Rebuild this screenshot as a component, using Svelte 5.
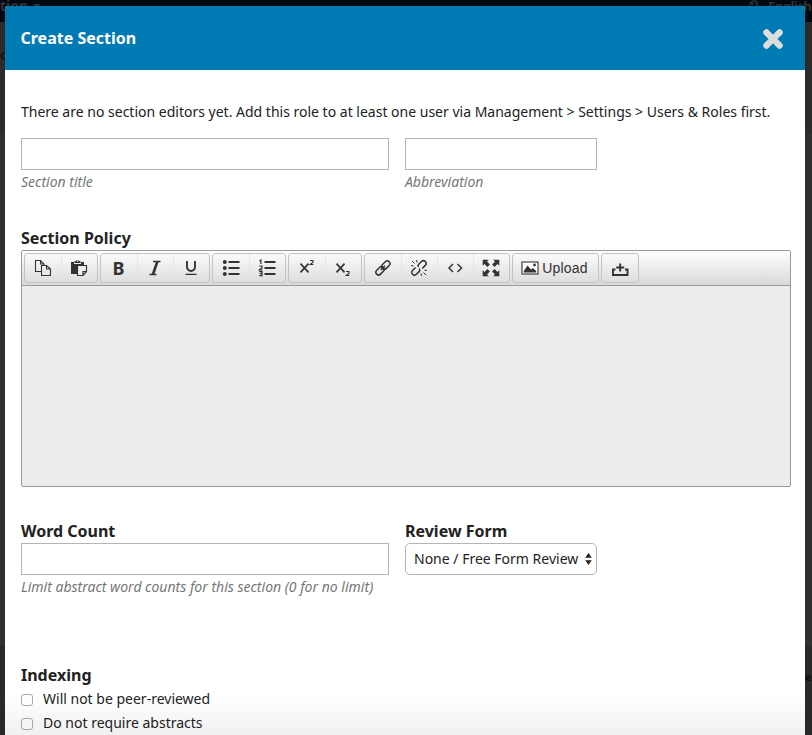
<script>
  const groups = [
    ['copy', 'paste'],
    ['bold', 'italic', 'underline'],
    ['bullets', 'numbers'],
    ['sup', 'sub'],
    ['link', 'unlink', 'code', 'full'],
    ['upload'],
    ['tray']
  ];
  const options = ['Will not be peer-reviewed', 'Do not require abstracts'];
</script>

<div class="page">
  <div class="backdrop">
    <span class="ghost nav">tion</span>
    <span class="ghost caret"></span>
    <svg class="ghost globe" width="10" height="10" viewBox="0 0 10 10"><circle cx="5" cy="5" r="4.200" fill="none" stroke="#333" stroke-width="1.200" /><path d="M2 2l3 1-2 3zM6 2l2 2-1 3z" fill="#333" /></svg>
    <span class="ghost lang">English</span>
    <span class="ghost side">c</span>
    <span class="ghost edge">e</span>
  </div>

  <main class="modal">
    <header>
      <h1>Create Section</h1>
      <button class="close" aria-label="Close">
        <svg width="22" height="22" viewBox="0 0 22 22"><path d="M4.700 4.700L17.300 17.300M17.300 4.700L4.700 17.300" stroke="#ddd" stroke-width="6.200" stroke-linecap="round" /><path d="M3.300 1.300H5.600L8.500 4.600 4.600 8.500 1.300 5.600V3.300zM16.400 1.300H18.700L20.700 3.300V5.600L17.400 8.700 13.500 4.800zM1.300 16.400L4.600 13.500 8.500 17.400 5.600 20.700H3.300L1.300 18.700zM17.400 13.500L20.700 16.400V18.700L18.700 20.700H16.400L13.500 17.400z" fill="#ddd" /></svg>
      </button>
    </header>

    <form>
      <p class="notice">There are no section editors yet. Add this role to at least one user via Management &gt; Settings &gt; Users &amp; Roles first.</p>
      <div class="row names">
        <label class="wide"><input type="text" /><span class="hint">Section title</span></label>
        <label class="narrow"><input type="text" /><span class="hint">Abbreviation</span></label>
      </div>

      <h2 class="policy">Section Policy</h2>
      <div class="editor">
        <div class="toolbar">
          {#each groups as group}
            <div class="group">
              {#each group as name}
                <button type="button" class="tool" class:upload={name === 'upload'} aria-label={name}>
                  {#if name === 'copy'}
                    <svg width="18" height="18" viewBox="0 0 18 18" fill="none" stroke="#333" stroke-width="1.100"><path d="M7 12.500H1.500V1.500H6.500L10 5V6" /><path d="M6.500 1.500V5H10M7.500 6.500H12.500L16.500 10V16.500H7.500ZM12.500 6.500V10H16.500" /></svg>
                  {:else if name === 'paste'}
                    <svg width="18" height="18" viewBox="0 0 18 18"><path d="M1 3H4V5H11V3H14V6H8V15H1ZM4.500 2H6Q7.500 -.2 9 2H10.500V4H4.500Z" fill="#333" /><path d="M7.500 6.500H16.500V12.500L13 16.500H7.500ZM16.500 12.500H13V16.500" fill="#eee" stroke="#333" stroke-width="1.200" /><circle cx="7.500" cy="2.200" r=".7" fill="#eee" /></svg>
                  {:else if name === 'bold'}
                    <span class="glyph bold">B</span>
                  {:else if name === 'italic'}
                    <svg width="18" height="18" viewBox="0 0 18 18"><path d="M7 2.500H14.500M3.500 15.500H10.500" stroke="#333" stroke-width="1.300" /><path d="M11.400 2.500L6.900 15.500" stroke="#333" stroke-width="2.600" /></svg>
                  {:else if name === 'underline'}
                    <svg width="18" height="18" viewBox="0 0 18 18" fill="none" stroke="#333"><path d="M5 2V7.500C5 13.400 13 13.400 13 7.500V2" stroke-width="1.900" /><path d="M3.500 15.300H14.500" stroke-width="1.300" /></svg>
                  {:else if name === 'bullets'}
                    <svg width="18" height="18" viewBox="0 0 18 18"><path d="M6.500 3H17.500M6.500 9H17.500M6.500 15H17.500" stroke="#333" stroke-width="1.900" /><circle cx="2.800" cy="3" r="2" fill="#333" /><circle cx="2.800" cy="9" r="2" fill="#333" /><circle cx="2.800" cy="15" r="2" fill="#333" /></svg>
                  {:else if name === 'numbers'}
                    <svg width="18" height="18" viewBox="0 0 18 18" fill="none" stroke="#333"><path d="M6.500 3H17.500M6.500 9H17.500M6.500 15H17.500" stroke-width="1.900" /><path d="M1.500 2L2.900 1V5M1.200 7H4V8.800L1.500 10.800H4.400M1.200 12.700H4V16.700H1.200M1.800 14.700H4" stroke-width="1.200" /></svg>
                  {:else if name === 'sup'}
                    <svg width="18" height="18" viewBox="0 0 18 18" fill="none" stroke="#333"><path d="M2.500 4.700L10.500 13.300M10.500 4.700L2.500 13.300" stroke-width="1.700" /><path d="M12 1.500H15V3.300L12.300 5.500H15.400" stroke-width="1.100" /></svg>
                  {:else if name === 'sub'}
                    <svg width="18" height="18" viewBox="0 0 18 18" fill="none" stroke="#333"><path d="M2.500 4.700L10.500 13.300M10.500 4.700L2.500 13.300" stroke-width="1.700" /><path d="M12 12.500H15V14.300L12.300 16.500H15.400" stroke-width="1.100" /></svg>
                  {:else if name === 'link'}
                    <svg width="18" height="18" viewBox="0 0 18 18" fill="none" stroke="#333"><g transform="rotate(-45 9 9)" stroke-width="1.500"><rect x=".2" y="6.200" width="9.400" height="5.400" rx="2.700" /><rect x="8.400" y="6.200" width="9.400" height="5.400" rx="2.700" /><path d="M6 8.900H12" /></g></svg>
                  {:else if name === 'unlink'}
                    <svg width="18" height="18" viewBox="0 0 18 18" fill="none" stroke="#333"><g transform="rotate(-45 9 9)" stroke-width="1.500"><path d="M7 6.200H2.700A2.700 2.700 0 0 0 2.700 11.600H6.500Q8.300 11.600 8.600 9.500M11 11.600H15.300A2.700 2.700 0 0 0 15.300 6.200H11.500Q9.700 6.200 9.400 8" /></g><path d="M2 2L4.500 4.500M6.500 1L7 3.500M1 6.500L3.500 7M16 16L13.500 13.500M11.500 17L11 14.500M17 11.500L14.500 11" stroke-width="1" /></svg>
                  {:else if name === 'code'}
                    <svg width="18" height="18" viewBox="0 0 18 18" fill="none" stroke="#333" stroke-width="1.500"><path d="M7 5L3 9 7 13M11.500 5L15.500 9 11.500 13" /></svg>
                  {:else if name === 'full'}
                    <svg width="18" height="18" viewBox="0 0 18 18" fill="#333"><path d="M.7 .7H6.800L5 2.500 7.900 5.400 5.400 7.900 2.500 5 .7 6.800ZM17.300 .7V6.800L15.500 5 12.600 7.900 10.100 5.400 13 2.500 11.200 .7ZM.7 17.300V11.200L2.500 13 5.400 10.100 7.900 12.600 5 15.500 6.800 17.300ZM17.300 17.300H11.200L13 15.500 10.100 12.600 12.600 10.100 15.500 13 17.300 11.200Z" /></svg>
                  {:else if name === 'upload'}
                    <svg width="18" height="14" viewBox="0 0 18 14"><rect x="1" y="1" width="16" height="12" fill="#fff" stroke="#333" stroke-width="1.100" /><path d="M2.800 11.500V10L6.500 4.500 10 8.500 12 7 15.200 10V11.500Z" fill="#333" /><circle cx="13.500" cy="4" r="1.400" fill="#333" /></svg>
                    <span class="up">Upload</span>
                  {:else}
                    <svg width="18" height="18" viewBox="0 0 18 18" fill="none" stroke="#333"><path d="M4.500 10.500H2V16H16.500V10.500H14" stroke-width="1.900" /><path d="M9.200 4.500V12.500M5.200 8.500H13.200" stroke-width="1.900" /></svg>
                  {/if}
                </button>
              {/each}
            </div>
          {/each}
        </div>
        <div class="canvas"></div>
      </div>

      <div class="row limits">
        <div class="wide">
          <h2>Word Count</h2>
          <input type="text" aria-label="Word Count" />
          <span class="hint">Limit abstract word counts for this section (0 for no limit)</span>
        </div>
        <div class="narrow">
          <h2>Review Form</h2>
          <div class="select"><span>None / Free Form Review</span><svg width="7" height="12" viewBox="0 0 7 12"><path d="M3.500 0L6.800 4.800H.2ZM3.500 12L.2 7.200H6.800Z" fill="#222" /></svg></div>
        </div>
      </div>

      <h2 class="indexing">Indexing</h2>
      {#each options as option}
        <label class="check"><input type="checkbox" /><span>{option}</span></label>
      {/each}
    </form>
    <div class="fade"></div>
  </main>
</div>

<style>
  .page { position: relative; width: 812px; height: 735px; overflow: hidden; box-sizing: border-box; padding: 6px 7px 0 5px; font: 14px/24px "Noto Sans", sans-serif; color: #222; }
  .page * { box-sizing: border-box; }
  .backdrop { position: absolute; inset: 0; overflow: hidden; background: linear-gradient(#00090f 0 22px, #2b2b2b 22px 134px, #303030 134px 646px, #292929 646px); }
  .ghost { position: absolute; color: #333; font-weight: 700; line-height: 16px; }
  .nav { left: 0; top: -2px; }
  .caret { left: 33px; top: 4px; border: 4px solid transparent; border-top-color: #333; }
  .globe { left: 749px; top: 0; }
  .lang { left: 768px; top: -2px; font-size: 13px; letter-spacing: -.5px; }
  .side { left: 0; top: 47px; color: #111; }
  .edge { left: 805px; top: 669px; color: #111; font-size: 11px; }
  .modal { position: relative; width: 800px; height: 729px; background: #fff; border-radius: 3px 3px 0 0; overflow: hidden; }
  header { display: flex; align-items: center; justify-content: space-between; height: 64px; padding: 0 21px 0 15.500px; background: #007ab2; color: #fff; }
  h1, h2, p { margin: 0; }
  h1 { font-size: 16px; line-height: 24px; }
  h2 { font-size: 16px; line-height: 24px; height: 24px; }
  button { padding: 0; border: 0; background: none; }
  .close { display: flex; margin-top: 1px; }
  form { padding: 30px 14px 0 16px; }
  .notice { white-space: nowrap; }
  .row { display: flex; gap: 16px; }
  .wide { width: 368px; }
  .narrow { width: 192px; }
  .names { margin-top: 14px; }
  input[type="text"] { display: block; width: 100%; height: 32px; border: 1px solid #b5b5b5; border-radius: 0; background: #fff; padding: 0; }
  .hint { display: block; height: 24px; font-style: italic; font-size: 14px; color: #777; white-space: nowrap; }
  .policy { margin-top: 32px; }
  .editor { width: 770px; height: 237px; border: 1px solid #999; border-radius: 2px; background: #ededed; overflow: hidden; }
  .toolbar { display: flex; gap: 2px; height: 35px; padding: 2px; border-bottom: 1px solid #999; background: linear-gradient(#fefefe, #d9d9d9); }
  .group { display: flex; height: 30px; border: 1px solid #c3c3c3; border-radius: 3px; background: linear-gradient(#fafafa, #dedede); overflow: hidden; }
  .tool { display: flex; align-items: center; justify-content: center; width: 36px; height: 28px; padding-right: 1px; color: #333; }
  .tool + .tool { box-shadow: inset 1px 0 #e6e6e6; }
  .tool.upload { width: 85px; gap: 3px; padding-right: 2px; }
  .up { font: 14px/18px "Liberation Sans", sans-serif; letter-spacing: .15px; }
  .bold { font: 700 18px/20px "Noto Sans", sans-serif; }
  .limits { margin-top: 32px; }
  .select { display: flex; align-items: center; justify-content: space-between; height: 32px; padding: 0 4px 0 8px; border: 1px solid #b5b5b5; border-radius: 5px; white-space: nowrap; }
  .indexing { margin-top: 64px; }
  .check { display: flex; align-items: center; height: 24px; }
  .check input { appearance: none; width: 12px; height: 12px; margin: 2px 10px 0 0; border: 1px solid #aaa; border-radius: 3px; background: #fff; }
  .fade { position: absolute; inset: auto 0 0; height: 40px; background: linear-gradient(transparent, rgba(0,0,0,.06)); pointer-events: none; }
</style>
